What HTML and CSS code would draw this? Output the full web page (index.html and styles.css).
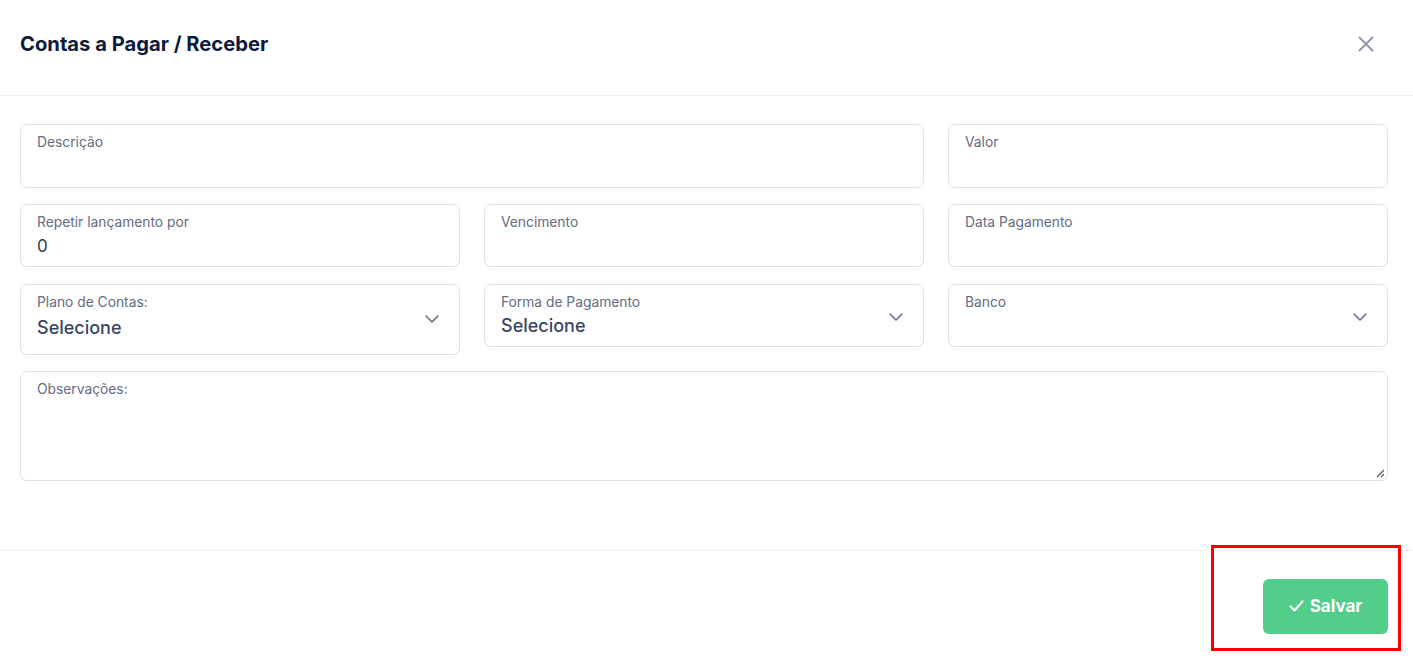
FILE: index.html
```html
<!DOCTYPE html>
<html lang="pt">
<head>
<meta charset="utf-8">
<title>Contas a Pagar / Receber</title>
<link rel="stylesheet" href="styles.css">
</head>
<body>
<div class="modal">
  <header class="modal-header">
    <h1 class="modal-title">Contas a Pagar / Receber</h1>
    <button class="close-btn" aria-label="Fechar">
      <svg width="16" height="16" viewBox="0 0 16 16"><path d="M1.5 1.5 L14.5 14.5 M14.5 1.5 L1.5 14.5" stroke="#9097ab" stroke-width="2" stroke-linecap="round" fill="none"/></svg>
    </button>
  </header>
  <main class="modal-body">
    <div class="form-grid">
      <div class="field span2"><div class="field-inner"><span class="label">Descrição</span><span class="value"></span></div></div>
      <div class="field"><div class="field-inner"><span class="label">Valor</span><span class="value"></span></div></div>

      <div class="field row2"><div class="field-inner"><span class="label">Repetir lançamento por</span><span class="value">0</span></div></div>
      <div class="field row2"><div class="field-inner"><span class="label">Vencimento</span><span class="value"></span></div></div>
      <div class="field row2"><div class="field-inner"><span class="label">Data Pagamento</span><span class="value"></span></div></div>

      <div class="field select select-lg"><div class="field-inner"><span class="label">Plano de Contas:</span><span class="value sel">Selecione</span></div>
        <svg class="chev" width="14" height="8" viewBox="0 0 14 8"><path d="M1 1 L7 7 L13 1" stroke="#66708c" stroke-width="1.6" fill="none" stroke-linecap="round" stroke-linejoin="round"/></svg></div>
      <div class="field select"><div class="field-inner"><span class="label">Forma de Pagamento</span><span class="value sel">Selecione</span></div>
        <svg class="chev" width="14" height="8" viewBox="0 0 14 8"><path d="M1 1 L7 7 L13 1" stroke="#66708c" stroke-width="1.6" fill="none" stroke-linecap="round" stroke-linejoin="round"/></svg></div>
      <div class="field select"><div class="field-inner"><span class="label">Banco</span><span class="value sel"></span></div>
        <svg class="chev" width="14" height="8" viewBox="0 0 14 8"><path d="M1 1 L7 7 L13 1" stroke="#66708c" stroke-width="1.6" fill="none" stroke-linecap="round" stroke-linejoin="round"/></svg></div>

      <div class="field span3 textarea"><div class="field-inner"><span class="label">Observações:</span></div>
        <svg class="grip" width="9" height="9" viewBox="0 0 9 9"><path d="M8 1 L1 8 M8 5 L5 8" stroke="#555" stroke-width="1.2" fill="none"/></svg></div>
    </div>
  </main>
  <footer class="modal-footer">
    <button class="save-btn">
      <svg width="15" height="12" viewBox="0 0 15 12"><path d="M1.5 6.5 L5.5 10.5 L13.5 1.5" stroke="#fff" stroke-width="2.2" fill="none" stroke-linecap="round" stroke-linejoin="round"/></svg>
      <span>Salvar</span>
    </button>
  </footer>
  <div class="highlight"></div>
</div>
</body>
</html>
```

FILE: styles.css
```css
* { box-sizing: border-box; }
html, body { margin: 0; padding: 0; background: #fff; }
body { font-family: Inter, "Noto Sans", "Liberation Sans", sans-serif; color: #1f2a44; }

.modal { position: relative; width: 1413px; height: 660px; }

.modal-header {
  height: 96px;
  display: flex;
  align-items: flex-start;
  justify-content: space-between;
  padding: 28px 39px 0 20px;
  border-bottom: 1px solid #eceef3;
}
.modal-title {
  margin: 0;
  font-size: 20.2px;
  line-height: 32px;
  font-weight: 700;
  color: #0e1a3a;
}
.close-btn {
  margin-top: 8px;
  background: none;
  border: 0;
  padding: 0;
  width: 16px;
  height: 16px;
  cursor: pointer;
}

.modal-body { padding: 28px 25px 0 20px; height: 455px; border-bottom: 1px solid #eceef3; }

.form-grid {
  display: grid;
  grid-template-columns: repeat(3, 1fr);
  column-gap: 24px;
  row-gap: 16px;
  align-items: start;
}
.span2 { grid-column: span 2; }
.span3 { grid-column: span 3; }

.field {
  position: relative;
  border: 1px solid #dcdfe9;
  border-radius: 7px;
  padding: 7.5px 16px 5.5px 16px;
  display: flex;
  align-items: center;
  min-height: 64px;
}
.field-inner { flex: 1; display: flex; flex-direction: column; }
.label {
  font-size: 13.8px;
  line-height: 18px;
  color: #646b82;
}
.value {
  font-size: 17px;
  line-height: 30px;
  min-height: 30px;
  color: #2f3a58;
}
.field.row2 { min-height: 63px; margin-bottom: 1px; }
.field.select { padding-bottom: 5.5px; padding-right: 20px; min-height: 63px; }
.field.select-lg { padding-bottom: 9.5px; }
.value.sel { font-size: 18px; line-height: 30px; min-height: 30px; font-weight: 500; color: #3a4566; }
.select-lg .value.sel { line-height: 34px; min-height: 34px; }
.chev { flex: none; }

.field.textarea { height: 110px; align-items: flex-start; }
.grip { position: absolute; right: 2px; bottom: 2px; }

.modal-footer {
  display: flex;
  justify-content: flex-end;
  padding: 28px 25px 0 20px;
}
.save-btn {
  display: flex;
  align-items: center;
  justify-content: center;
  gap: 6px;
  width: 125px;
  height: 55px;
  background: #52cd8a;
  border: 0;
  border-radius: 6px;
  color: #fff;
  font-family: Inter, "Noto Sans", "Liberation Sans", sans-serif;
  font-size: 17px;
  font-weight: 700;
  padding: 0 0 2px 0;
}

.highlight {
  position: absolute;
  left: 1211px;
  top: 545px;
  width: 190px;
  height: 106px;
  border: 3px solid #ff0000;
  pointer-events: none;
}
```
